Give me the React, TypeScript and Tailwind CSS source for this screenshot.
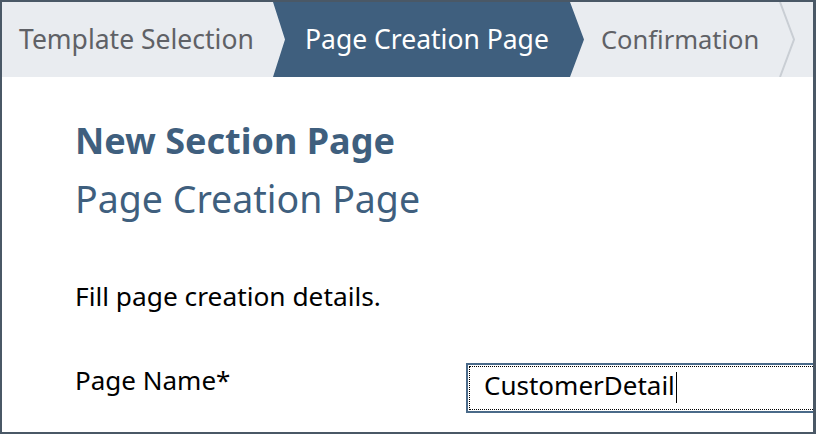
export default function App() {
  return (
    <div
      className="w-[816px] h-[434px] overflow-hidden bg-white border-[#4a5866] border-t-2 border-l-2 border-r-[3px] border-b-2 flex flex-col"
      style={{ fontFamily: '"Noto Sans", "Open Sans", sans-serif' }}
    >
      {/* Wizard steps */}
      <div className="h-[75px] shrink-0 bg-[#e9ecf0] flex items-stretch">
        <div className="w-[271px] shrink-0 flex items-center pl-[17px] text-[26.5px] text-[#5f6166]">
          Template Selection
        </div>
        <div className="w-[311px] shrink-0 flex items-center pl-[32px] text-[26.5px] text-white bg-[#3f5f7e] [clip-path:polygon(0_0,calc(100%-14px)_0,100%_50%,calc(100%-14px)_100%,0_100%,12px_50%)]">
          Page Creation Page
        </div>
        <div className="w-[195px] shrink-0 flex items-center pl-[17px] text-[25.5px] text-[#5f6166]">
          Confirmation
        </div>
        <svg width="18" height="75" viewBox="0 0 18 75" className="shrink-0">
          <polyline points="1,0 15,37.5 1,75" fill="none" stroke="#c9ced4" strokeWidth="2" />
        </svg>
      </div>

      {/* Content */}
      <div className="flex-1 pl-[73px] pt-[42px]">
        <h1 className="text-[36px] font-bold text-[#3f5f7e] leading-[44px]">New Section Page</h1>
        <h2 className="text-[37.5px] text-[#3f5f7e] leading-[44px] mt-[14px]">Page Creation Page</h2>
        <p className="text-[26.3px] text-black leading-[32px] mt-[59px]">Fill page creation details.</p>
        <div className="flex items-start mt-[51px]">
          <label className="w-[391px] shrink-0 text-[26px] leading-[32px] mt-px text-black">Page Name*</label>
          <div className="w-[360px] shrink-0 h-[50px] border-2 border-[#4a6a89] p-px">
            <div className="h-full border border-dotted border-black flex items-start pl-[14px] text-[26px] text-black">
              <span className="leading-[32px] mt-[2px]">CustomerDetail</span>
              <span className="w-px h-[31px] bg-black ml-px mt-[5px]" />
            </div>
          </div>
        </div>
      </div>
    </div>
  )
}
